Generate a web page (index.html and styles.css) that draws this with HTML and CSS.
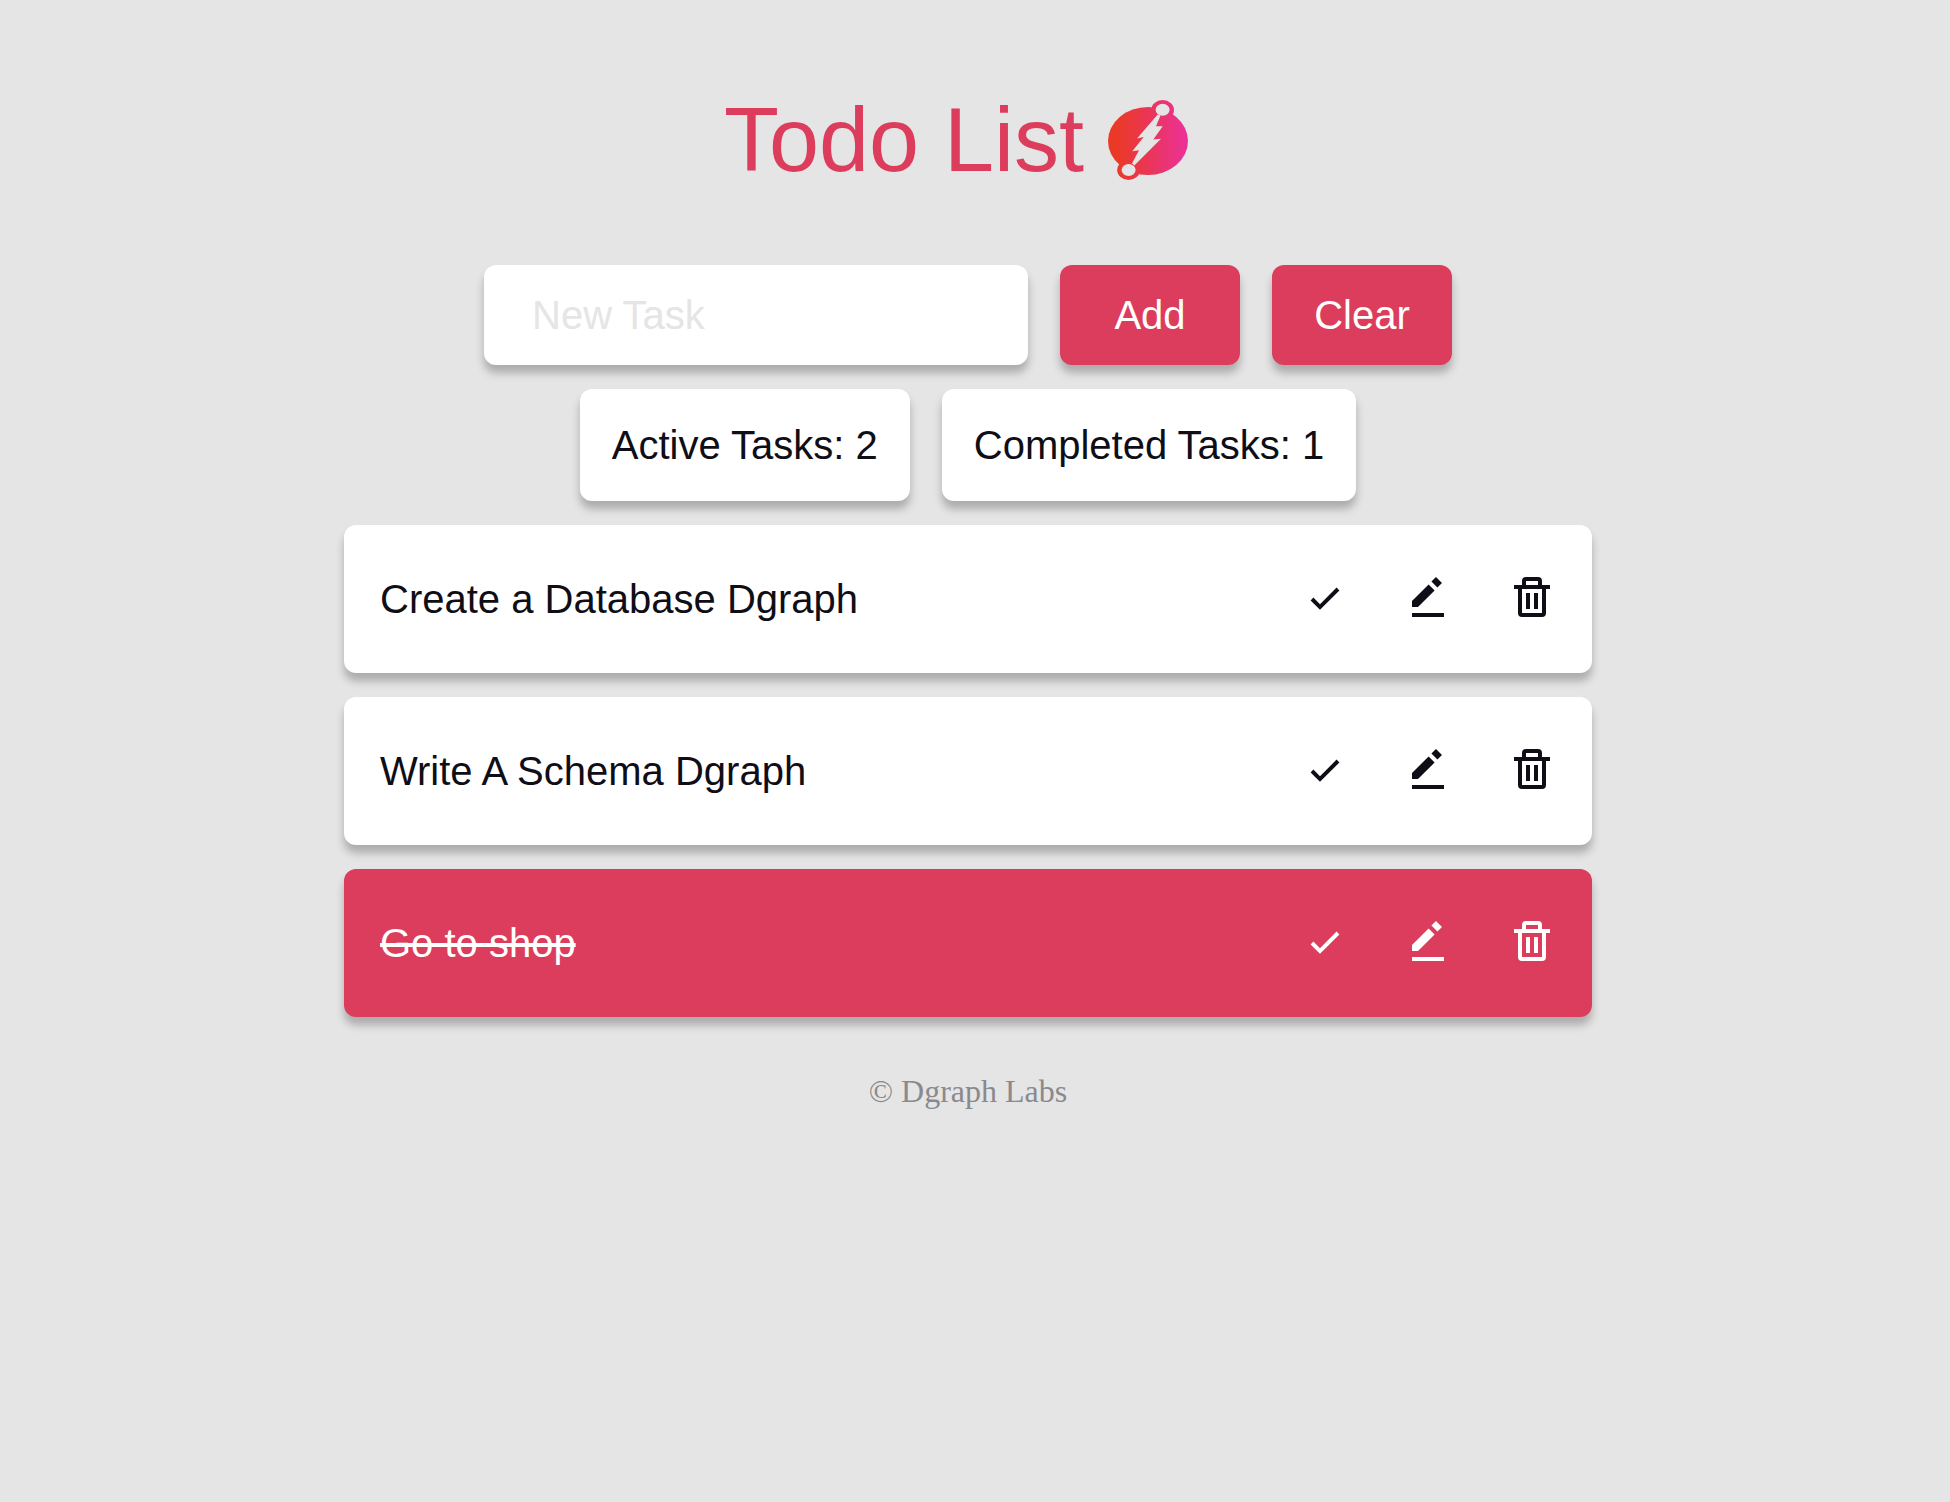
FILE: index.html
```html
<!DOCTYPE html>
<html lang="en">
<head>
<meta charset="utf-8">
<meta name="viewport" content="width=device-width, initial-scale=1">
<title>Todo List</title>
<link rel="stylesheet" href="styles.css">
</head>
<body>
<svg class="sprite" aria-hidden="true">
  <symbol id="check" viewBox="0 0 24 24"><path d="m10 15.586-3.293-3.293-1.414 1.414L10 18.414l9.707-9.707-1.414-1.414z"/></symbol>
  <symbol id="pencil" viewBox="0 0 24 24"><path d="m16 2.012 3 3L16.713 7.3l-3-3zM4 14v3h3l8.299-8.287-3-3zm0 6h16v2H4z"/></symbol>
  <symbol id="trash" viewBox="0 0 24 24"><path d="M5 20a2 2 0 0 0 2 2h10a2 2 0 0 0 2-2V8h2V6h-4V4a2 2 0 0 0-2-2H9a2 2 0 0 0-2 2v2H3v2h2zM9 4h6v2H9zM8 8h9v12H7V8z"/><path d="M9 10h2v8H9zm4 0h2v8h-2z"/></symbol>
</svg>
<div class="page">
  <header class="header">
    <h1 class="title">Todo List</h1>
    <svg class="logo" viewBox="0 0 80 80" role="img" aria-label="Dgraph">
      <defs>
        <linearGradient id="flame" gradientUnits="userSpaceOnUse" x1="0" y1="0" x2="80" y2="0">
          <stop offset="0.1" stop-color="#ea3a27"/>
          <stop offset="0.35" stop-color="#ea3743"/>
          <stop offset="1" stop-color="#eb319a"/>
        </linearGradient>
      </defs>
      <g fill="url(#flame)">
        <ellipse cx="40" cy="41" rx="40" ry="34"/>
        <ellipse cx="54.6" cy="10" rx="11.4" ry="10"/>
        <ellipse cx="20.6" cy="70" rx="11.4" ry="10"/>
      </g>
      <g class="logo-cut">
        <ellipse cx="54.6" cy="9.7" rx="7" ry="6"/>
        <ellipse cx="20.6" cy="70" rx="7" ry="6"/>
        <path d="M49.7 14.5 52.5 15.5 48 26.3H54.7L45.3 39.5 53 38.8 26.3 65.5 24 63.5 31 50.3 24.3 51.3 35.7 37 29 38.5z"/>
      </g>
    </svg>
  </header>
  <main class="main">
    <form class="task-form">
      <input class="task-input surface" type="text" placeholder="New Task" aria-label="New Task">
      <button class="button surface" type="submit">Add</button>
      <button class="button surface" type="button">Clear</button>
    </form>
    <div class="counters">
      <p class="counter surface">Active Tasks: 2</p>
      <p class="counter surface">Completed Tasks: 1</p>
    </div>
    <ul class="tasks">
      <li class="task surface">
        <span class="task-name">Create a Database Dgraph</span>
        <div class="actions">
          <button class="icon-button" type="button" aria-label="Complete"><svg class="icon"><use href="#check"/></svg></button>
          <button class="icon-button" type="button" aria-label="Edit"><svg class="icon"><use href="#pencil"/></svg></button>
          <button class="icon-button" type="button" aria-label="Delete"><svg class="icon"><use href="#trash"/></svg></button>
        </div>
      </li>
      <li class="task surface">
        <span class="task-name">Write A Schema Dgraph</span>
        <div class="actions">
          <button class="icon-button" type="button" aria-label="Complete"><svg class="icon"><use href="#check"/></svg></button>
          <button class="icon-button" type="button" aria-label="Edit"><svg class="icon"><use href="#pencil"/></svg></button>
          <button class="icon-button" type="button" aria-label="Delete"><svg class="icon"><use href="#trash"/></svg></button>
        </div>
      </li>
      <li class="task task-done surface">
        <span class="task-name">Go to shop</span>
        <div class="actions">
          <button class="icon-button" type="button" aria-label="Mark as active"><svg class="icon"><use href="#check"/></svg></button>
          <button class="icon-button" type="button" aria-label="Edit"><svg class="icon"><use href="#pencil"/></svg></button>
          <button class="icon-button" type="button" aria-label="Delete"><svg class="icon"><use href="#trash"/></svg></button>
        </div>
      </li>
    </ul>
  </main>
  <footer class="footer">© Dgraph Labs</footer>
</div>
</body>
</html>
```
FILE: styles.css
```css
:root {
  --accent: #dd3d5c;
  --ink: #0f0e17;
  --paper: #e5e5e5;
}

* {
  box-sizing: border-box;
}

body {
  margin: 0;
  background: var(--paper);
  color: var(--ink);
  font: 300 40px/48px "Helvetica Neue", "Liberation Sans", Arial, sans-serif;
}

.sprite {
  display: none;
}

.page {
  padding: 92px 30px 56px 16px;
}

.header {
  display: flex;
  justify-content: center;
  align-items: center;
  gap: 24px;
  margin-bottom: 77px;
  padding-right: 24px;
}

.title {
  margin: 0;
  color: var(--accent);
  font-size: 90px;
  font-weight: 300;
  line-height: 96px;
}

.logo {
  width: 80px;
  height: 80px;
}

.logo-cut {
  fill: var(--paper);
}

.main {
  display: flex;
  flex-direction: column;
  gap: 24px;
  max-width: 1248px;
  margin: 0 auto;
}

.surface {
  border: 0;
  border-radius: 12px;
  background: #fff;
  box-shadow: 0 8px 8px rgba(0, 0, 0, 0.25);
}

.task-form,
.counters {
  display: flex;
  flex-wrap: wrap;
  justify-content: center;
  gap: 24px 32px;
}

.task-input {
  width: 544px;
  height: 100px;
  padding: 0 48px;
  color: var(--ink);
  font: inherit;
}

.task-input::placeholder {
  color: var(--paper);
  opacity: 1;
}

.button {
  width: 180px;
  height: 100px;
  padding: 0;
  background: var(--accent);
  color: #fffffe;
  font: inherit;
}

.counter {
  margin: 0;
  padding: 32px;
}

.tasks {
  display: flex;
  flex-direction: column;
  gap: 24px;
  margin: 0;
  padding: 0;
  list-style: none;
}

.task {
  display: flex;
  justify-content: space-between;
  align-items: center;
  gap: 32px;
  padding: 48px 36px;
}

.task.task-done {
  background: var(--accent);
  color: #fffffe;
}

.task-done .task-name {
  text-decoration: line-through;
  text-decoration-thickness: 4px;
}

.actions {
  display: flex;
  gap: 56px;
  padding-bottom: 4px;
}

.icon-button {
  display: flex;
  padding: 0;
  border: 0;
  background: none;
  color: inherit;
}

.icon {
  width: 48px;
  height: 48px;
  fill: currentColor;
}

.footer {
  margin-top: 56px;
  color: #8a8a8e;
  font: 32px/36px "Liberation Serif", "Times New Roman", serif;
  text-align: center;
}
```
